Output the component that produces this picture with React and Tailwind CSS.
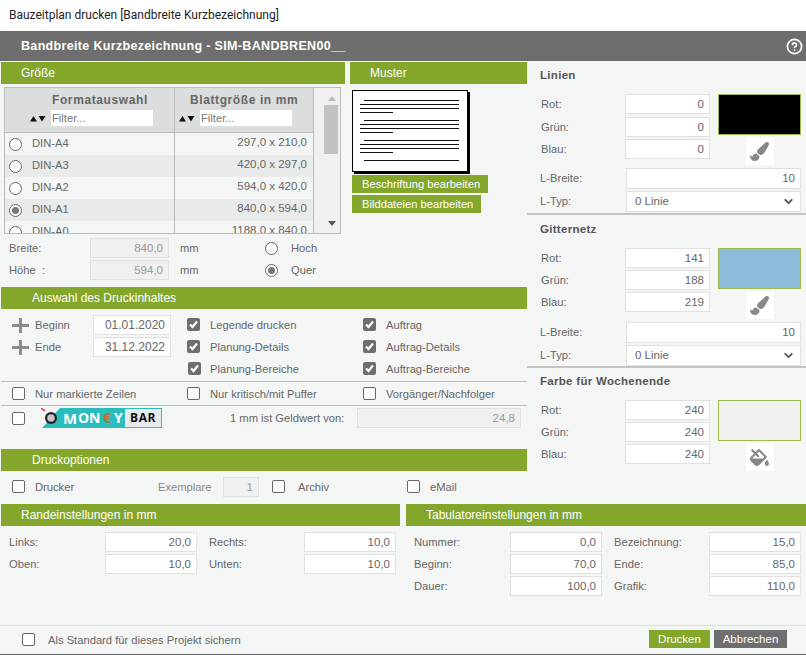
import React from 'react'
import { ChevronDown, CircleHelp } from 'lucide-react'
import { FaPaintBrush, FaFillDrip } from 'react-icons/fa'

const formats = [
  ['DIN-A4', '297,0 x 210,0'],
  ['DIN-A3', '420,0 x 297,0'],
  ['DIN-A2', '594,0 x 420,0'],
  ['DIN-A1', '840,0 x 594,0', true],
  ['DIN-A0', '1188,0 x 840,0'],
]

const Bar = ({ children, className = '' }) => (
  <div className={`h-[22px] bg-[#84a72b] text-white text-[12px] leading-[22px] ${className}`}>{children}</div>
)

const Field = ({ value, className = '', disabled }) => (
  <div
    className={`h-[20px] border border-[#e0e0e0] text-[11.5px] text-right pr-[5px] leading-[19px] shrink-0 ${
      disabled ? 'bg-[#f0f0f0] text-[#999]' : 'bg-white text-[#666]'
    } ${className}`}
  >
    {value}
  </div>
)

const Radio = ({ checked }) => (
  <span className="w-[13px] h-[13px] rounded-full border border-[#666] bg-white flex items-center justify-center shrink-0">
    {checked && <span className="w-[7px] h-[7px] rounded-full bg-[#777]" />}
  </span>
)

const Check = ({ checked, className = '' }) =>
  checked ? (
    <span className={`w-[13px] h-[13px] rounded-[2px] bg-[#6e6e6e] flex items-center justify-center shrink-0 ${className}`}>
      <svg width="11" height="11" viewBox="0 0 11 11">
        <path d="M2 5.5 L4.5 8 L9 2.5" fill="none" stroke="white" strokeWidth="2.2" />
      </svg>
    </span>
  ) : (
    <span className={`w-[13px] h-[13px] rounded-[2px] border border-[#666] bg-white shrink-0 ${className}`} />
  )

const CheckLabel = ({ checked, children, className = '', gap = 'gap-[10px]' }) => (
  <div className={`flex items-center ${gap} ${className}`}>
    <Check checked={checked} />
    <span className="pt-px">{children}</span>
  </div>
)

const SortArrows = () => (
  <svg width="16" height="7" viewBox="0 0 16 7" className="shrink-0">
    <path d="M0 6.5 L3.5 1 L7 6.5 Z M8.5 1 L15.5 1 L12 6.5 Z" fill="#111" />
  </svg>
)

const Plus = () => (
  <svg width="17" height="15" viewBox="0 0 17 15" className="shrink-0">
    <path d="M7 0 H10 V6 H17 V9 H10 V15 H7 V9 H0 V6 H7 Z" fill="#8c8c8c" />
  </svg>
)

const Muster = () => (
  <div className="ml-[2px] mt-[6px] w-[116px] h-[82px] border border-black bg-white shadow-[2px_2px_0_#000] shrink-0">
    <svg width="114" height="80" viewBox="0 0 114 80">
      <g stroke="#111" strokeWidth="1">
        {[0, 20, 40].map((y) => (
          <g key={y}>
            <path d={`M11 ${9.5 + y} H106`} />
            <path d={`M7 ${13.5 + y} H106`} />
            <path d={`M7 ${17.5 + y} H106`} />
            <path d={`M7 ${21.5 + y} H40`} />
          </g>
        ))}
        <path d="M11 69.5 H106" />
      </g>
    </svg>
  </div>
)

const MoneyBar = () => (
  <div className="relative w-[121px] h-[20px] bg-[#2bbcc0] shrink-0 overflow-hidden font-bold font-['Open_Sans',sans-serif]">
    <svg width="22" height="20" viewBox="0 0 22 20" className="absolute left-0 top-0">
      <path d="M0 0 H19 L1 20 H0 Z" fill="#f4f6f5" />
      <circle cx="10" cy="10" r="6" fill="#222" />
      <circle cx="10" cy="10" r="3.8" fill="#c4c4c4" />
      <path d="M0 0 L4 3" stroke="#e0558a" strokeWidth="2" />
    </svg>
    <div className="absolute left-[22px] top-0 flex h-[20px] items-center text-white leading-none">
      <span className="text-[15px] w-[15px]">M</span>
      <span className="text-[14px] w-[11px]">O</span>
      <span className="text-[14px] w-[13px]">N</span>
      <span className="text-[14px] w-[11px] ml-[1px] text-[#b8772a]">€</span>
      <span className="text-[14px] w-[11px]">Y</span>
    </div>
    <span className="absolute left-[84px] top-px w-[36px] h-[18px] bg-[#e6ebec] text-[#111] text-[12px] leading-[18px] text-center tracking-[0.5px]">
      BAR
    </span>
  </div>
)

const ColorGroup = ({ title, rgb, color, icon, children, className = '', firstGap = '' }) => (
  <div className={`px-[13px] ${className}`}>
    <div className="h-[32px] font-bold text-[#555] text-[11.5px] tracking-[0.3px] leading-[26px]">{title}</div>
    <div className="flex">
      <div className="w-[178px] flex flex-col gap-[2px] items-start">
        {['Rot:', 'Grün:', 'Blau:'].map((l, i) => (
          <div key={l} className={`flex items-center h-[20px] pl-px ${i === 0 ? firstGap : ''}`}>
            <span className="w-[84px] pt-px">{l}</span>
            <Field value={rgb[i]} className="w-[85px]" />
          </div>
        ))}
      </div>
      <div className="w-[83px] flex flex-col items-center">
        <div className={`w-[83px] h-[41px] border border-[#9dbb4a] ${color}`} />
        <div className="w-[28px] h-[28px] mt-[2px] bg-white flex items-center justify-center text-[#888]">{icon}</div>
      </div>
    </div>
    {children}
  </div>
)

const LineFields = () => (
  <div className="flex flex-col gap-[2px] mt-[3px]">
    <div className="flex items-center h-[21px]">
      <span className="w-[86px]">L-Breite:</span>
      <Field value="10" className="w-[175px] h-[21px]" />
    </div>
    <div className="flex items-center h-[21px]">
      <span className="w-[86px]">L-Typ:</span>
      <div className="w-[175px] h-[21px] bg-white border border-[#e0e0e0] flex items-center justify-between pl-[8px] pr-[5px] text-[#666] text-[11.5px]">
        <span>0 Linie</span>
        <ChevronDown size={13} strokeWidth={3.5} className="text-[#555]" />
      </div>
    </div>
  </div>
)

const NumPair = ({ a, av, b, bv }) => (
  <div className="flex items-center h-[20px]">
    <span className="w-[96px] pt-px">{a}</span>
    <Field value={av} className="w-[92px]" />
    <span className="w-[107px] pl-[12px] pt-px">{b}</span>
    <Field value={bv} className="w-[92px]" />
  </div>
)

export default function App() {
  return (
    <div className="w-[806px] h-[655px] flex flex-col bg-[#f4f6f5] text-[#666] text-[11.2px] font-['Liberation_Sans',Arial,sans-serif] overflow-hidden">
      {/* window title */}
      <div className="h-[31px] bg-white pl-[9px] leading-[31px] text-[12px] text-[#222] font-['Roboto',sans-serif]">
        Bauzeitplan drucken [Bandbreite Kurzbezeichnung]
      </div>
      <div className="h-[30px] bg-[#6e6e6e] flex items-center justify-between pl-[21px] pr-[3px] text-white font-bold text-[12.5px] tracking-[0.33px]">
        <span>Bandbreite Kurzbezeichnung - SIM-BANDBREN00__</span>
        <CircleHelp size={17} strokeWidth={2.4} />
      </div>

      <div className="flex h-[443px]">
        <div className="w-[527px] shrink-0">
          <div className="flex h-[226px]">
            {/* Größe */}
            <div className="w-[344px] ml-px pt-px">
              <Bar className="pl-[20px]">Größe</Bar>
              <div className="ml-[3px] mt-[3px] w-[337px] h-[147px] border border-[#bbb] flex overflow-hidden">
                <div className="w-[309px] border-r border-[#bbb] shrink-0">
                  <div className="flex h-[45px] bg-[#dcdddd] border-b border-[#bbb] font-bold text-[#666] text-[12px] tracking-[0.6px]">
                    <div className="w-[170px] border-r border-[#bbb] pl-[25px]">
                      <div className="pl-[22px] pt-[3px] h-[22px]">Formatauswahl</div>
                      <div className="flex items-center gap-[5px]">
                        <SortArrows />
                        <div className="w-[102px] h-[16px] bg-white pl-px leading-[16px] font-normal text-[#777] text-[11.2px] tracking-normal">Filter...</div>
                      </div>
                    </div>
                    <div className="flex-1 pl-[4px]">
                      <div className="pl-[11px] pt-[3px] h-[22px]">Blattgröße in mm</div>
                      <div className="flex items-center gap-[5px]">
                        <SortArrows />
                        <div className="w-[92px] h-[16px] bg-white pl-px leading-[16px] font-normal text-[#777] text-[11.2px] tracking-normal">Filter...</div>
                      </div>
                    </div>
                  </div>
                  {formats.map(([name, size, checked], i) => (
                    <div key={name} className={`flex h-[22px] items-center ${i % 2 ? 'bg-[#e9ebea]' : 'bg-[#f4f6f5]'}`}>
                      <div className="w-[170px] border-r border-[#bbb] h-full flex items-center pl-[4px] gap-[10px]">
                        <Radio checked={checked} />
                        <span className="pb-[2px]">{name}</span>
                      </div>
                      <div className="flex-1 text-right pr-[6px] pb-[2px] text-[11.5px]">{size}</div>
                    </div>
                  ))}
                </div>
                <div className="flex-1 bg-[#f0f0f0] relative">
                  <svg width="8" height="5" viewBox="0 0 8 5" className="absolute left-[14px] top-[8px]">
                    <path d="M0 5 L4 0 L8 5 Z" fill="#bbb" />
                  </svg>
                  <div className="absolute left-[10px] top-[17px] w-[14px] h-[49px] bg-[#c2c2c2]" />
                  <svg width="8" height="5" viewBox="0 0 8 5" className="absolute left-[14px] top-[133px]">
                    <path d="M0 0 L8 0 L4 5 Z" fill="#555" />
                  </svg>
                </div>
              </div>
              <div className="mt-[4px] flex flex-col gap-[2px] pl-[8px]">
                {[
                  ['Breite:', '840,0', 'Hoch', false],
                  ['Höhe  :', '594,0', 'Quer', true],
                ].map(([label, val, dir, on]) => (
                  <div key={dir} className="flex items-center h-[20px]">
                    <span className="w-[81px] whitespace-pre pt-px">{label}</span>
                    <Field value={val} disabled className="w-[79px]" />
                    <span className="w-[96px] pl-[11px] pt-px">mm</span>
                    <Radio checked={on} />
                    <span className="pl-[13px] pt-px">{dir}</span>
                  </div>
                ))}
              </div>
            </div>
            {/* Muster */}
            <div className="w-[177px] ml-[5px] pt-px">
              <Bar className="pl-[20px]">Muster</Bar>
              <Muster />
              <div className="mt-[3px] ml-[2px] flex flex-col items-start gap-[2px]">
                <div className="h-[18px] w-[136px] bg-[#84a72b] text-white pl-[10px] leading-[18px]">Beschriftung bearbeiten</div>
                <div className="h-[18px] w-[129px] bg-[#84a72b] text-white pl-[10px] leading-[18px]">Bilddateien bearbeiten</div>
              </div>
            </div>
          </div>

          {/* Druckinhalt */}
          <div className="ml-px">
            <Bar className="pl-[31px]">Auswahl des Druckinhaltes</Bar>
            <div className="pt-[5px] grid grid-cols-[186px_176px_1fr] auto-rows-[22px] items-center h-[73px] border-b border-[#bbb]">
              <div className="flex items-center pl-[11px]">
                <Plus />
                <span className="w-[64px] pl-[6px] pt-px">Beginn</span>
                <Field value="01.01.2020" className="w-[78px] text-left pl-[4px] text-[12px]" />
              </div>
              <CheckLabel checked>Legende drucken</CheckLabel>
              <CheckLabel checked>Auftrag</CheckLabel>
              <div className="flex items-center pl-[11px]">
                <Plus />
                <span className="w-[64px] pl-[6px] pt-px">Ende</span>
                <Field value="31.12.2022" className="w-[78px] text-left pl-[4px] text-[12px]" />
              </div>
              <CheckLabel checked>Planung-Details</CheckLabel>
              <CheckLabel checked>Auftrag-Details</CheckLabel>
              <div />
              <CheckLabel checked className="pl-px" gap="gap-[9px]">Planung-Bereiche</CheckLabel>
              <CheckLabel checked>Auftrag-Bereiche</CheckLabel>
            </div>
            <div className="h-[24px] grid grid-cols-[186px_176px_1fr] items-center border-b border-[#bbb]">
              <CheckLabel className="pl-[11px]">Nur markierte Zeilen</CheckLabel>
              <CheckLabel>Nur kritisch/mit Puffer</CheckLabel>
              <CheckLabel>Vorgänger/Nachfolger</CheckLabel>
            </div>
            <div className="h-[43px] flex items-start pt-[2px]">
              <div className="flex items-center h-[20px] pl-[11px]">
                <Check />
                <div className="ml-[16px]">
                  <MoneyBar />
                </div>
                <span className="w-[195px] pl-[68px] whitespace-nowrap pt-px">1 mm ist Geldwert von:</span>
                <Field value="24,8" disabled className="w-[164px]" />
              </div>
            </div>
            <Bar className="pl-[31px]">Druckoptionen</Bar>
            <div className="flex items-center h-[32px] pl-[11px]">
              <CheckLabel className="w-[146px]">Drucker</CheckLabel>
              <span className="w-[65px] text-[#888] pt-px">Exemplare</span>
              <Field value="1" disabled className="w-[36px] text-left pl-[4px]" />
              <CheckLabel className="w-[135px] ml-[13px]" gap="gap-[13px]">Archiv</CheckLabel>
              <CheckLabel>eMail</CheckLabel>
            </div>
          </div>
        </div>

        {/* Farben */}
        <div className="flex-1 pt-px">
          <ColorGroup title="Linien" rgb={[0, 0, 0]} color="bg-black" icon={<FaPaintBrush size={19} />} firstGap="mb-px" className="h-[153px] border-b-2 border-[#c4c4c4]">
            <LineFields />
          </ColorGroup>
          <ColorGroup title="Gitternetz" rgb={[141, 188, 219]} color="bg-[#8dbcdb]" icon={<FaPaintBrush size={19} />} className="h-[153px] border-b-2 border-[#c4c4c4] pt-px">
            <LineFields />
          </ColorGroup>
          <ColorGroup title="Farbe für Wochenende" rgb={[240, 240, 240]} color="bg-[#f0f0f0]" icon={<FaFillDrip size={19} />} />
        </div>
      </div>

      <div className="flex gap-[6px] h-[121px]">
        <div className="w-[399px] ml-px">
          <Bar className="pl-[20px]">Randeinstellungen in mm</Bar>
          <div className="pl-[8px] pt-[6px] flex flex-col gap-[2px]">
            <NumPair a="Links:" av="20,0" b="Rechts:" bv="10,0" />
            <NumPair a="Oben:" av="10,0" b="Unten:" bv="10,0" />
          </div>
        </div>
        <div className="flex-1">
          <Bar className="pl-[20px]">Tabulatoreinstellungen in mm</Bar>
          <div className="pl-[8px] pt-[6px] flex flex-col gap-[2px]">
            <NumPair a="Nummer:" av="0,0" b="Bezeichnung:" bv="15,0" />
            <NumPair a="Beginn:" av="70,0" b="Ende:" bv="85,0" />
            <NumPair a="Dauer:" av="100,0" b="Grafik:" bv="110,0" />
          </div>
        </div>
      </div>

      <div className="flex-1 border-t border-[#ddd] border-b-[#666] border-b flex items-center pl-[22px] pr-[19px]">
        <CheckLabel gap="gap-[13px]">Als Standard für dieses Projekt sichern</CheckLabel>
        <div className="ml-auto mb-[2px] flex gap-[4px] text-white text-[11.5px]">
          <div className="w-[61px] h-[18px] bg-[#84a72b] text-center leading-[18px]">Drucken</div>
          <div className="w-[73px] h-[18px] bg-[#6e6e6e] text-center leading-[18px]">Abbrechen</div>
        </div>
      </div>
    </div>
  )
}
